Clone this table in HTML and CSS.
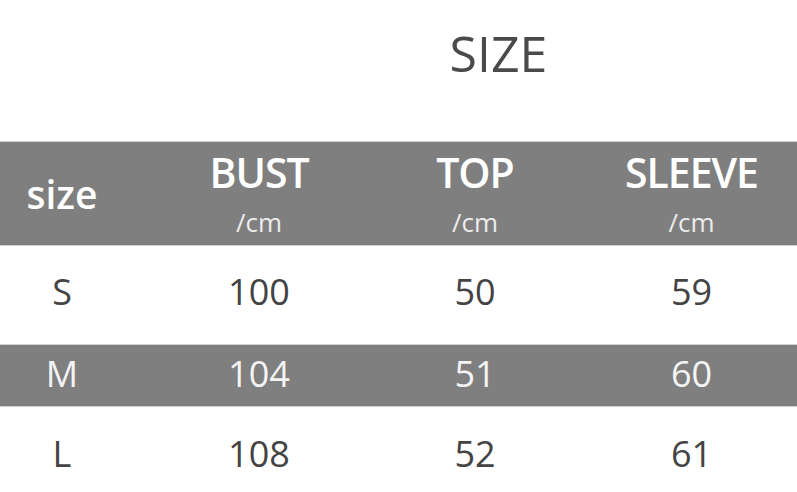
FILE: index.html
```html
<!DOCTYPE html>
<html lang="en">
<head>
<meta charset="utf-8">
<title>SIZE</title>
<link rel="stylesheet" href="styles.css">
</head>
<body>
<div class="page">
  <div class="title-wrap"><h1 class="title">SIZE</h1></div>
  <div class="table">
    <div class="row head">
      <div class="cell c1"><span class="label-size">size</span></div>
      <div class="cell c2"><span class="label">BUST</span><span class="unit">/cm</span></div>
      <div class="cell c3"><span class="label">TOP</span><span class="unit">/cm</span></div>
      <div class="cell c4"><span class="label">SLEEVE</span><span class="unit">/cm</span></div>
    </div>
    <div class="row data row-s">
      <div class="cell c1">S</div>
      <div class="cell c2">100</div>
      <div class="cell c3">50</div>
      <div class="cell c4">59</div>
    </div>
    <div class="row data row-m">
      <div class="cell c1">M</div>
      <div class="cell c2">104</div>
      <div class="cell c3">51</div>
      <div class="cell c4">60</div>
    </div>
    <div class="row data row-l">
      <div class="cell c1">L</div>
      <div class="cell c2">108</div>
      <div class="cell c3">52</div>
      <div class="cell c4">61</div>
    </div>
  </div>
</div>
</body>
</html>
```
FILE: styles.css
```css
* { box-sizing: border-box; }
html, body { margin: 0; padding: 0; background: #ffffff; }
body { font-family: "Open Sans", "Noto Sans", "Liberation Sans", sans-serif; overflow: hidden; }

.page { width: 797px; }

.title-wrap {
  height: 141px;
  padding: 28px 0 0 200px;
  display: flex;
  justify-content: center;
}
.title {
  margin: 0;
  font-size: 50px;
  line-height: 50px;
  font-weight: 400;
  color: #4a4a4a;
}

.row {
  display: grid;
  grid-template-columns: 124px 270px 162px 241px;
}
.cell {
  display: flex;
  flex-direction: column;
  align-items: center;
  justify-content: center;
  text-align: center;
}
.c4 { padding-left: 30px; }

.head {
  height: 105px;
  background: #7f7f7f;
  border-top: 1px solid #cfcfcf;
  border-bottom: 1px solid #cfcfcf;
  color: #ffffff;
}
.head .cell { justify-content: flex-start; padding-top: 10px; }
.head .c1 { justify-content: center; padding-top: 0; }
.label-size {
  font-size: 39px;
  line-height: 38px;
  font-weight: 600;
}
.label {
  font-size: 41px;
  line-height: 40px;
  font-weight: 600;
  letter-spacing: -1px;
}
.unit {
  margin-top: 15px;
  font-size: 26px;
  line-height: 30px;
  font-weight: 400;
  color: #ececec;
}

.data {
  font-size: 36px;
  line-height: 36px;
  font-weight: 400;
  color: #444444;
}
.row-s { height: 98px; padding-bottom: 7px; }
.row-m {
  height: 63px;
  padding-bottom: 4px;
  background: #7f7f7f;
  border-top: 1px solid #cfcfcf;
  border-bottom: 1px solid #cfcfcf;
  color: #f4f4f4;
}
.row-l { height: 94px; }
```
